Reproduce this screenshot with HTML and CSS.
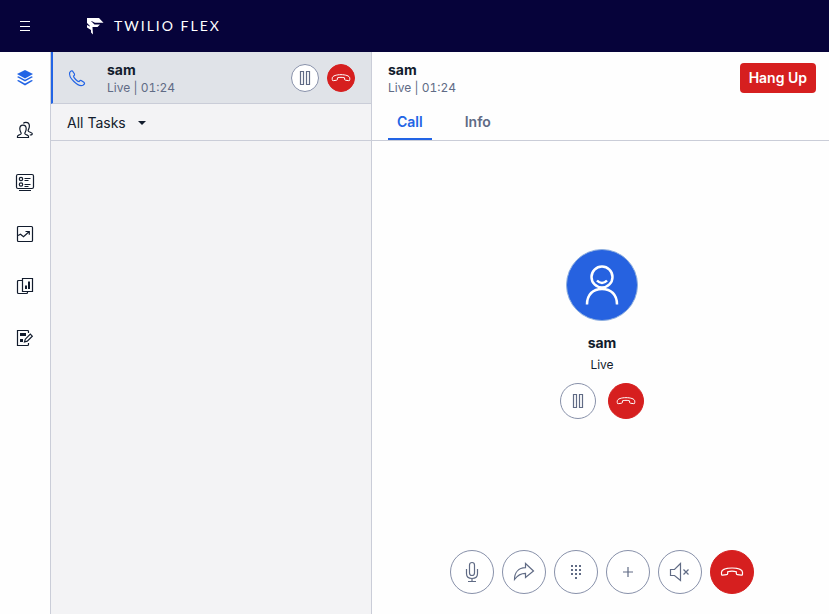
FILE: index.html
```html
<!DOCTYPE html>
<html lang="en">
<head>
<meta charset="utf-8">
<meta name="viewport" content="width=device-width, initial-scale=1">
<title>Twilio Flex</title>
<link rel="stylesheet" href="styles.css">
</head>
<body>
<svg class="sprite" aria-hidden="true">
  <symbol id="hangup" viewBox="0 0 24 24">
    <path d="M1.500 13.500v-1.300C1.500 9.300 7 8 12 8s10.500 1.300 10.500 4.200v1.800c0 .9-.4 1.300-1.200 1.200l-3.800-.5c-.9-.1-1.200-.5-1.200-1.300v-1.600c-2.500-.8-6.100-.8-8.600 0v1.600c0 .8-.3 1.200-1.200 1.300l-3.800.5c-.8.1-1.200-.3-1.200-1.200z"/>
  </symbol>
  <symbol id="pause" viewBox="0 0 16 16">
    <path d="M3.500 1.500h3v13h-3zM9.500 1.500h3v13h-3z"/>
  </symbol>
</svg>
<div class="app">
  <header class="topbar">
    <button class="menu" type="button" aria-label="Menu">
      <svg width="10" height="10" viewBox="0 0 10 10"><path d="M0 .5h10M0 5.500h10M0 9.500h10"/></svg>
    </button>
    <div class="brand">
      <svg width="17" height="17" viewBox="0 0 17 17"><path d="M0 0h12l4.500 4.700H8L4.500 3H4l3.500 3.500h5.500L10.500 9H5.500v.5L6 16.500 4 14.500V12L0 9.500V7l3 1.500V8L0 5z"/></svg>
      <span>TWILIO FLEX</span>
    </div>
  </header>
  <div class="workspace">
    <nav class="rail" aria-label="Main">
      <button type="button" aria-label="Agent desktop" class="active">
        <svg width="20" height="20" viewBox="0 0 20 20"><path class="solid" d="M10 2l8 4-8 4.500L2 6z"/><path class="solid" d="M2 9l1.500-.8 6.500 3.600 6.500-3.600L18 9l-8 4.600zM2 12.800l1.500-.8 6.500 3.600 6.500-3.600 1.500.8-8 4.700z"/></svg>
      </button>
      <button type="button" aria-label="Teams">
        <svg width="20" height="20" viewBox="0 0 20 20"><path d="M2.500 17.500v-1.300c0-1.200 3.700-1.400 3.700-2.800 0-1-1.400-1.900-1.400-4.600 0-2.300 1.200-3.700 3.200-3.700s3.200 1.400 3.200 3.700c0 2.700-1.400 3.600-1.400 4.600 0 1.400 3.700 1.600 3.700 2.800v1.300zM8.300 3.300c.6-.7 1.500-1 2.600-1 2.300 0 3.500 1.500 3.500 3.800 0 2.600-1.300 3.500-1.300 4.600 0 1.500 4.200 1.600 4.200 3 0 1-.8 1.300-2.500 1.300"/></svg>
      </button>
      <button type="button" aria-label="Queues">
        <svg width="20" height="20" viewBox="0 0 20 20"><rect x="1.500" y="2.500" width="17" height="14" rx="1.500"/><circle cx="6" cy="7" r="1.700"/><circle cx="6" cy="12.500" r="1.700"/><path d="M9.500 6.500h6M9.500 8.500h4M9.500 12.500h6M9.500 14.500h4M4 18.500h12"/></svg>
      </button>
      <button type="button" aria-label="Dashboards">
        <svg width="20" height="20" viewBox="0 0 20 20"><rect x="2.500" y="2.500" width="15" height="15" rx="1"/><path d="M3 11.500l2.500-1.300 3 2.500 5.500-5M10.500 7.500h3.800v3.200"/></svg>
      </button>
      <button type="button" aria-label="Analyze">
        <svg width="20" height="20" viewBox="0 0 20 20"><path d="M7 4.500H3.500a1 1 0 0 0-1 1v11a1 1 0 0 0 1 1h8a1 1 0 0 0 1-1V16M7.500 2.500h10v13h-10z"/><path class="solid" d="M10 9.500h2V13h-2zM13 5.500h2V13h-2z"/></svg>
      </button>
      <button type="button" aria-label="Questionnaires">
        <svg width="20" height="20" viewBox="0 0 20 20"><path d="M13.500 5V3.500a1 1 0 0 0-1-1h-10v15h10a1 1 0 0 0 1-1V15"/><path class="solid" d="M5 5h6v3H5zM5 11h3v3H5z"/><path d="M9.500 14l.8-2.800 5-5 2 2-5 5z"/></svg>
      </button>
    </nav>
    <section class="tasks" aria-label="Tasks">
      <article class="task">
        <svg class="phone" width="20" height="20" viewBox="0 0 20 20"><path d="M2.700 4.500C3.600 3 4.600 2.400 5.400 3L7.500 6c.5.800-.1 1.400-1 2.100 0 1.700 3.900 5.600 5.600 5.500.7-.9 1.300-1.400 2.100-1l3 2c.8.7.2 1.800-1.300 2.700C11 19.200 1.200 9.600 2.700 4.500z"/></svg>
        <div class="task-text">
          <h2 class="name">sam</h2>
          <p class="status">Live | 01:24</p>
        </div>
        <button class="round small" type="button" aria-label="Hold"><svg width="16" height="16"><use href="#pause"/></svg></button>
        <button class="round small danger" type="button" aria-label="Hang up sam"><svg width="20" height="20"><use href="#hangup"/></svg></button>
      </article>
      <button class="filter" type="button">All Tasks
        <svg width="8" height="4" viewBox="0 0 8 4"><path d="M0 0h8L4 4z"/></svg>
      </button>
    </section>
    <main class="detail">
      <div class="detail-head">
        <div>
          <h1 class="name">sam</h1>
          <p class="status">Live | 01:24</p>
        </div>
        <button class="hang" type="button">Hang Up</button>
      </div>
      <div class="tabs" role="tablist">
        <button type="button" role="tab" aria-selected="true">Call</button>
        <button type="button" role="tab" aria-selected="false">Info</button>
      </div>
      <div class="call">
        <div class="caller">
          <div class="avatar">
            <svg width="40" height="44" viewBox="0 0 40 44"><circle cx="20" cy="14" r="10.500"/><path d="M15 17.500c3 3.300 7 3.300 10 0M5 41.500c0-10 6-15.500 15-15.500s15 5.500 15 15.500"/></svg>
          </div>
          <h2 class="name">sam</h2>
          <p class="live">Live</p>
          <div class="pair">
            <button class="round medium" type="button" aria-label="Hold call"><svg width="16" height="16"><use href="#pause"/></svg></button>
            <button class="round medium danger" type="button" aria-label="Hang up caller"><svg width="20" height="20"><use href="#hangup"/></svg></button>
          </div>
        </div>
        <div class="controls">
          <button class="round" type="button" aria-label="Mute"><svg width="24" height="24" viewBox="0 0 24 24"><rect x="9.500" y="2.500" width="5" height="13" rx="2.500"/><path d="M6.500 9v4.500c0 3 2 5 5.500 5s5.500-2 5.500-5V9M12 18.500v3M8 21.500h8"/></svg></button>
          <button class="round" type="button" aria-label="Transfer"><svg width="24" height="24" viewBox="0 0 24 24"><path d="M13.500 3.500l8 7.500-8 6.500v-4.200c-5 0-8 2-11 6.200C2.500 12.500 6.500 7.900 13.500 7.700z"/></svg></button>
          <button class="round" type="button" aria-label="Dialpad"><svg width="24" height="24" viewBox="0 0 24 24"><path class="solid" d="M7 5h2v2H7zM11 5h2v2h-2zM15 5h2v2h-2zM7 9h2v2H7zM11 9h2v2h-2zM15 9h2v2h-2zM7 13h2v2H7zM11 13h2v2h-2zM15 13h2v2h-2zM11 17h2v2h-2z"/></svg></button>
          <button class="round" type="button" aria-label="Add"><svg width="24" height="24" viewBox="0 0 24 24"><path d="M12 7v10M7 12h10"/></svg></button>
          <button class="round" type="button" aria-label="Speaker off"><svg width="24" height="24" viewBox="0 0 24 24"><path d="M2.500 9.500h4l6-6v17l-6-5h-4zM15.500 9.500l5 5M20.500 9.500l-5 5"/></svg></button>
          <button class="round danger" type="button" aria-label="End call"><svg width="24" height="24"><use href="#hangup"/></svg></button>
        </div>
      </div>
    </main>
  </div>
</div>
</body>
</html>
```
FILE: styles.css
```css
* {
  box-sizing: border-box;
}

body,
h1,
h2,
p {
  margin: 0;
}

body {
  font-family: Inter, "Liberation Sans", sans-serif;
  font-size: 14px;
  line-height: 20px;
  color: #121c2d;
  background: #fefefe;
}

button {
  font: inherit;
  color: inherit;
  padding: 0;
  border: 0;
  background: none;
}

svg {
  display: block;
  flex: none;
  fill: none;
  stroke: currentColor;
  stroke-width: 1.2;
}

.solid {
  fill: currentColor;
  stroke: none;
}

.sprite {
  display: none;
}

.app {
  display: flex;
  flex-direction: column;
  min-height: 100vh;
}

.topbar {
  display: flex;
  align-items: center;
  height: 52px;
  padding-left: 12px;
  gap: 49px;
  color: #fff;
  background: #06033a;
}

.menu {
  display: grid;
  place-items: center;
  width: 26px;
  height: 26px;
}

.menu svg {
  stroke-width: 1;
}

.brand {
  display: flex;
  align-items: center;
  gap: 10px;
  font-family: Lato, sans-serif;
  font-weight: 400;
  letter-spacing: 2px;
}

.brand svg {
  fill: currentColor;
  stroke: none;
}

.workspace {
  display: grid;
  grid-template-columns: 51px 321px 1fr;
  flex: 1;
}

.rail {
  border-right: 1px solid #cacdd8;
}

.rail button {
  display: grid;
  place-items: center;
  width: 100%;
  height: 52px;
}

.rail .active {
  color: #2264e5;
}

.tasks {
  border-right: 1px solid #cacdd8;
  background: #f3f3f5;
}

.task {
  display: flex;
  align-items: center;
  gap: 8px;
  height: 52px;
  padding: 0 16px 0 14px;
  border-left: 2px solid #2264e5;
  border-bottom: 1px solid #cacdd8;
  background: #e0e3e8;
}

.phone {
  color: #2264e5;
}

.task-text {
  flex: 1;
  padding: 2px 0 0 12px;
}

.name {
  font-size: 14px;
  line-height: 18px;
  font-weight: 700;
}

.status {
  font-size: 12px;
  line-height: 18px;
  font-variant-numeric: tabular-nums;
  color: #606b85;
}

.round {
  display: grid;
  place-items: center;
  width: 44px;
  height: 44px;
  border: 1px solid #8891aa;
  border-radius: 50%;
  color: #606b85;
  background: #fff;
}

.small {
  width: 28px;
  height: 28px;
}

.medium {
  width: 36px;
  height: 36px;
}

.danger {
  color: #fff;
  border-color: #d61f1f;
  background: #d61f1f;
}

.filter {
  display: flex;
  align-items: center;
  gap: 12px;
  width: 100%;
  height: 37px;
  padding: 2px 0 0 16px;
  border-bottom: 1px solid #cacdd8;
}

.filter svg {
  fill: currentColor;
  stroke: none;
}

.detail {
  display: flex;
  flex-direction: column;
}

.detail-head {
  display: flex;
  justify-content: space-between;
  align-items: center;
  height: 52px;
  padding: 2px 13px 0 16px;
}

.hang {
  height: 30px;
  margin-bottom: 2px;
  padding: 0 9px;
  border-radius: 4px;
  font-weight: 600;
  color: #fff;
  background: #d61f1f;
}

.tabs {
  display: flex;
  gap: 24px;
  height: 37px;
  padding-left: 16px;
  border-bottom: 1px solid #cacdd8;
}

.tabs button {
  padding: 2px 9px 0;
  border-bottom: 2px solid transparent;
  font-weight: 600;
  color: #606b85;
}

.tabs [aria-selected="true"] {
  border-color: #2264e5;
  color: #2264e5;
}

.call {
  display: flex;
  flex: 1;
  flex-direction: column;
  align-items: center;
  padding: 0 0 20px 3px;
}

.caller {
  display: flex;
  flex: 1;
  flex-direction: column;
  align-items: center;
  justify-content: center;
  padding-bottom: 24px;
}

.avatar {
  display: grid;
  place-items: center;
  width: 72px;
  height: 72px;
  margin-bottom: 13px;
  border: 1px solid #8eafdf;
  border-radius: 50%;
  color: #fff;
  background: #2662e0;
}

.avatar svg {
  stroke-width: 2.5;
}

.live {
  margin: 4px 0 9px;
  font-size: 12px;
  line-height: 18px;
}

.pair {
  display: flex;
  gap: 12px;
}

.controls {
  display: flex;
  gap: 8px;
}
```
